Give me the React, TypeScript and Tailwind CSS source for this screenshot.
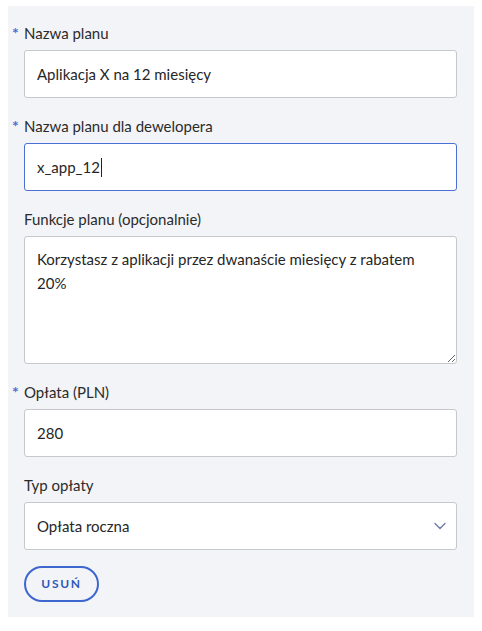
import React from "react";

const font = { fontFamily: "Lato, 'Noto Sans', sans-serif" };

function Label({ children, required }: { children: React.ReactNode; required?: boolean }) {
  return (
    <div className="relative h-6 mb-[5px] flex items-center text-[15px] text-[#2b2b2b]">
      {required && (
        <span className="absolute left-[-12px] top-[0px] text-[#4a6fd0] text-[16px] font-bold">*</span>
      )}
      {children}
    </div>
  );
}

export default function App() {
  return (
    <div className="bg-white w-[482px] h-[631px] pt-[6px] pl-[8px]" style={font}>
      <div className="w-[466px] h-[611px] bg-[#f3f4f8] pt-[15px] pl-4 pr-[17px] flex flex-col">
        <div className="flex flex-col gap-4">
          <div>
            <Label required>Nazwa planu</Label>
            <input
              readOnly
              defaultValue="Aplikacja X na 12 miesięcy"
              className="w-full h-12 bg-white border border-[#c6c8cd] rounded-[3px] px-3 text-[15px] text-[#262626] outline-none"
            />
          </div>
          <div>
            <Label required>Nazwa planu dla dewelopera</Label>
            <div className="w-full h-12 bg-white border border-[#4b70d2] rounded-[3px] px-3 flex items-center text-[15px] text-[#262626]">
              <span>x_app_12</span>
              <span className="w-px h-[19px] bg-[#222] ml-[1px]" />
            </div>
          </div>
          <div>
            <Label>Funkcje planu (opcjonalnie)</Label>
            <textarea
              readOnly
              defaultValue={"Korzystasz z aplikacji przez dwanaście miesięcy z rabatem\n20%"}
              className="block w-full h-32 bg-white border border-[#c6c8cd] rounded-[3px] px-3 py-[10px] text-[15px] leading-6 text-[#262626] outline-none resize-y"
            />
          </div>
          <div>
            <Label required>Opłata (PLN)</Label>
            <input
              readOnly
              defaultValue="280"
              className="w-full h-12 bg-white border border-[#c6c8cd] rounded-[3px] px-3 text-[15px] text-[#262626] outline-none"
            />
          </div>
          <div>
            <Label>Typ opłaty</Label>
            <div className="w-full h-12 bg-white border border-[#c6c8cd] rounded-[3px] pl-3 pr-[10px] flex items-center justify-between text-[15px] text-[#262626]">
              <span>Opłata roczna</span>
              <svg width="12" height="8" viewBox="0 0 12 8" fill="none">
                <path d="M1 1.5L6 6.5L11 1.5" stroke="#6b7aa0" strokeWidth="1.4" strokeLinecap="round" strokeLinejoin="round" />
              </svg>
            </div>
          </div>
        </div>
        <div className="mt-[16px]">
          <button className="w-[75px] h-9 rounded-full border-2 border-[#3d66cf] text-[#2f58b8] text-[12px] font-bold tracking-[0.14em] flex items-center justify-center bg-transparent">
            USUŃ
          </button>
        </div>
      </div>
    </div>
  );
}
